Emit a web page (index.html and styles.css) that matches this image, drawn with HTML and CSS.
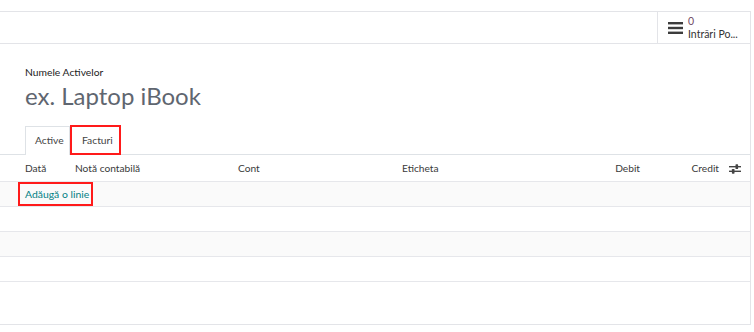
FILE: index.html
```html
<!DOCTYPE html>
<html lang="ro">
<head>
  <meta charset="UTF-8" />
  <title>Active</title>
  <link rel="stylesheet" href="styles.css">
</head>
<body>
  <div class="page">
    <div class="statbar">
      <div class="stat-btn">
        <svg class="stat-icon" width="15" height="12" viewBox="0 0 15 12">
          <rect x="0" y="0" width="15" height="2.4" fill="#3c3c3c"/>
          <rect x="0" y="4.8" width="15" height="2.4" fill="#3c3c3c"/>
          <rect x="0" y="9.6" width="15" height="2.4" fill="#3c3c3c"/>
        </svg>
        <div class="stat-text">
          <span class="stat-value">0</span>
          <span class="stat-label">Intrări Po...</span>
        </div>
      </div>
    </div>

    <div class="sheet">
      <div class="title">
        <div class="title-label">Numele Activelor</div>
        <div class="title-name">ex. Laptop iBook</div>
      </div>

      <div class="tabs">
        <div class="tab active">Active</div>
        <div class="tab marked">Facturi</div>
      </div>

      <div class="lines">
        <div class="row head">
          <span>Dată</span>
          <span>Notă contabilă</span>
          <span>Cont</span>
          <span>Eticheta</span>
          <span class="num">Debit</span>
          <span class="num">Credit</span>
          <span class="opt">
            <svg width="12" height="10" viewBox="0 0 12 10">
              <rect x="0" y="2" width="12" height="1.4" fill="#444"/>
              <rect x="0" y="6.6" width="12" height="1.4" fill="#444"/>
              <rect x="6.5" y="0.3" width="2.6" height="4.8" rx="0.6" fill="#444"/>
              <rect x="2.9" y="4.9" width="2.6" height="4.8" rx="0.6" fill="#444"/>
            </svg>
          </span>
        </div>
        <div class="row add-row">
          <a class="add-line marked" href="#">Adăugă o linie</a>
        </div>
        <div class="row"></div>
        <div class="row odd"></div>
        <div class="row"></div>
        <div class="tail"></div>
      </div>
    </div>
  </div>
</body>
</html>
```

FILE: styles.css
```css
body {
  margin: 0;
  background: #fff;
  font-family: Lato, sans-serif;
  color: #333;
}

.page {
  margin-top: 11px;
  width: 751px;
}

.statbar {
  display: flex;
  justify-content: flex-end;
  height: 31px;
  border-top: 1px solid #e3e4e8;
  border-bottom: 1px solid #e3e4e8;
  border-right: 1px solid #e3e4e8;
}

.stat-btn {
  width: 93px;
  border-left: 1px solid #e3e4e8;
  display: flex;
  align-items: center;
  gap: 5px;
  padding-left: 10px;
  box-sizing: border-box;
}

.stat-icon {
  margin-top: 1px;
}

.stat-text {
  display: flex;
  flex-direction: column;
  font-size: 10.5px;
  line-height: 13px;
}

.stat-value {
  color: #714b67;
}

.stat-label {
  color: #333;
}

.sheet {
  border-right: 1px solid #e3e4e8;
  border-bottom: 1px solid #e3e4e8;
  height: 280px;
}

.title {
  padding: 21px 0 0 25px;
}

.title-label {
  font-size: 10.3px;
  line-height: 14px;
  color: #222;
}

.title-name {
  margin-top: 1px;
  font-size: 24px;
  line-height: 32px;
  color: #5f6670;
}

.tabs {
  display: flex;
  margin-top: 14px;
  padding-left: 25px;
  border-bottom: 1px solid #dee2e6;
  height: 28px;
}

.tab {
  font-size: 10.3px;
  line-height: 28px;
  padding: 0 10px;
  color: #444;
  box-sizing: border-box;
}

.tab.active {
  border: 1px solid #dee2e6;
  border-bottom: none;
  background: #fff;
  padding: 0 9px;
  line-height: 27px;
  width: 45px;
  margin-bottom: -1px;
}

.marked {
  outline: 2px solid #ff1a1a;
  outline-offset: -1px;
}

.tab.marked {
  margin-left: 1px;
  width: 49px;
  padding: 0 11px;
}

.row {
  display: grid;
  grid-template-columns: 50px 163px 164px 158px 80px 79px 31px;
  padding-left: 25px;
  height: 24px;
  border-bottom: 1px solid #e6e7eb;
  font-size: 10.2px;
  align-items: center;
}

.row.head {
  height: 26px;
  color: #3a3a3a;
}

.row .num {
  text-align: right;
}

.row .opt {
  display: flex;
  justify-content: center;
  padding-top: 1px;
}

.add-row,
.row.odd {
  background: #fafafa;
}

.add-row {
  display: flex;
}

.add-line {
  color: #017e84;
  text-decoration: none;
  font-size: 10.4px;
  line-height: 22px;
  padding: 0 3px 0 6px;
  margin-left: -6px;
}

.tail {
  height: 43px;
}
```
